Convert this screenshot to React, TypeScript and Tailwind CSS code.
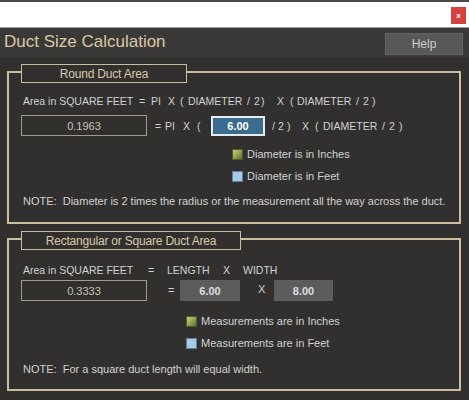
import React from 'react';

const font = { fontFamily: '"Liberation Sans", Arial, sans-serif' };

// each token gets a fixed slot so the formula columns line up like the original form
function Tokens({ items }: { items: [string, string][] }) {
  return (
    <>
      {items.map(([text, w], i) => (
        <span key={i} className={`${w} shrink-0 whitespace-pre`}>
          {text}
        </span>
      ))}
    </>
  );
}

function Check({ kind }: { kind: 'inches' | 'feet' }) {
  return kind === 'inches' ? (
    <span className="inline-block w-[11px] h-[11px] bg-gradient-to-br from-[#c3cc86] via-[#96a452] to-[#5f6f30] border border-[#4d5a26]" />
  ) : (
    <span className="inline-block w-[11px] h-[11px] bg-[#a7cbe7] border border-[#5f7f9c]" />
  );
}

function Group({ title, legendW, children }: { title: string; legendW: string; children: React.ReactNode }) {
  return (
    <div className="relative ml-[7px] w-[454px] border-2 border-[#cdbd9f]">
      {/* legend box sitting across the top border */}
      <div
        className={`absolute top-[-9px] left-[12px] ${legendW} h-[19px] flex items-center justify-center border border-[#cdbd9f] bg-[#31302e] text-[12px] text-[#d9c9a9] tracking-[-0.2px]`}
      >
        {title}
      </div>
      {children}
    </div>
  );
}

export default function App() {
  return (
    <div className="w-[469px] h-[400px] overflow-hidden bg-[#31302e] text-[#d2d2d2]" style={font}>
      {/* window chrome */}
      <div className="h-[28px] bg-white border-t-2 border-[#4a4a4a] border-b border-b-[#9a9a9a] flex items-start justify-end">
        <div className="mt-[5px] mr-[3px] w-[15px] h-[17px] bg-[#d6433f] flex items-center justify-center text-white text-[8px] font-bold leading-none">
          x
        </div>
      </div>

      {/* header */}
      <div className="h-[29px] bg-[#3a3937] flex items-center justify-between">
        <div className="pl-[4px] -mt-[2px] text-[17px] text-[#dcc8a6] leading-none">Duct Size Calculation</div>
        <button className="mr-[6px] mt-[3px] w-[78px] h-[22px] bg-[#585858] border border-[#626262] text-[12px] text-[#cfcfcf]">
          Help
        </button>
      </div>

      <div className="pt-[14px]">
        <Group title="Round Duct Area" legendW="w-[166px]">
          <div className="pt-[21px] pb-[14px] text-[11px] leading-[14px]">
            <div className="ml-[14px] flex text-[10.5px]">
              <Tokens
                items={[
                  ['Area in SQUARE FEET', 'w-[116px]'],
                  ['=', 'w-[12px]'],
                  ['PI', 'w-[17px]'],
                  ['X', 'w-[12px]'],
                  ['(', 'w-[8px]'],
                  ['DIAMETER', 'w-[59px]'],
                  ['/', 'w-[7px]'],
                  ['2', 'w-[7px]'],
                  [')', 'w-[16px]'],
                  ['X', 'w-[13px]'],
                  ['(', 'w-[7px]'],
                  ['DIAMETER', 'w-[59px]'],
                  ['/', 'w-[7px]'],
                  ['2', 'w-[9px]'],
                  [')', 'w-auto'],
                ]}
              />
            </div>
            <div className="mt-[7px] ml-[12px] flex items-center h-[21px]">
              <div className="w-[126px] h-[21px] border border-[#a39a8a] flex items-center justify-center text-[#c9c1b3]">
                0.1963
              </div>
              <span className="w-[8px] shrink-0" />
              <div className="flex text-[10.5px]">
                <Tokens
                  items={[
                    ['=', 'w-[10px]'],
                    ['PI', 'w-[18px]'],
                    ['X', 'w-[14px]'],
                    ['(', 'w-[14px]'],
                  ]}
                />
              </div>
              <div className="w-[54px] h-[20px] bg-[#3b6c8e] border-2 border-[#e6edf2] flex items-center justify-center font-bold text-white">
                6.00
              </div>
              <span className="w-[7px] shrink-0" />
              <div className="flex text-[10.5px]">
                <Tokens
                  items={[
                    ['/', 'w-[6px]'],
                    ['2', 'w-[9px]'],
                    [')', 'w-[15px]'],
                    ['X', 'w-[13px]'],
                    ['(', 'w-[8px]'],
                    ['DIAMETER', 'w-[59px]'],
                    ['/', 'w-[7px]'],
                    ['2', 'w-[10px]'],
                    [')', 'w-auto'],
                  ]}
                />
              </div>
            </div>
            <div className="mt-[11px] ml-[223px] flex items-center gap-[4px]">
              <Check kind="inches" />
              <span>Diameter is in Inches</span>
            </div>
            <div className="mt-[8px] ml-[223px] flex items-center gap-[4px]">
              <Check kind="feet" />
              <span>Diameter is in Feet</span>
            </div>
            <div className="mt-[11px] ml-[14px] whitespace-pre">
              {'NOTE:  Diameter is 2 times the radius or the measurement all the way across the duct.'}
            </div>
          </div>
        </Group>

        <div className="h-[14px]" />

        <Group title="Rectangular or Square Duct Area" legendW="w-[220px]">
          <div className="pt-[23px] pb-[13px] text-[11px] leading-[14px]">
            <div className="ml-[14px] flex text-[10.5px]">
              <span className="w-[125px]">Area in SQUARE FEET</span>
              <span className="w-[19px]">=</span>
              <span className="w-[56px]">LENGTH</span>
              <span className="w-[20px]">X</span>
              <span>WIDTH</span>
            </div>
            <div className="mt-[3px] ml-[12px] flex items-center h-[21px]">
              <div className="w-[126px] h-[21px] border border-[#a39a8a] flex items-center justify-center text-[#c9c1b3]">
                0.3333
              </div>
              <span className="ml-[21px] w-[12px] -mt-[2px]">=</span>
              <div className="w-[60px] h-[21px] bg-[#5c5c5c] flex items-center justify-center font-bold text-[#dedede]">
                6.00
              </div>
              <span className="ml-[18px] w-[16px] -mt-[3px]">X</span>
              <div className="w-[59px] h-[21px] bg-[#5c5c5c] flex items-center justify-center font-bold text-[#dedede]">
                8.00
              </div>
            </div>
            <div className="mt-[13px] ml-[177px] flex items-center gap-[4px]">
              <Check kind="inches" />
              <span>Measurements are in Inches</span>
            </div>
            <div className="mt-[8px] ml-[177px] flex items-center gap-[4px]">
              <Check kind="feet" />
              <span>Measurements are in Feet</span>
            </div>
            <div className="mt-[12px] ml-[14px] whitespace-pre">
              {'NOTE:  For a square duct length will equal width.'}
            </div>
          </div>
        </Group>
      </div>
    </div>
  );
}
